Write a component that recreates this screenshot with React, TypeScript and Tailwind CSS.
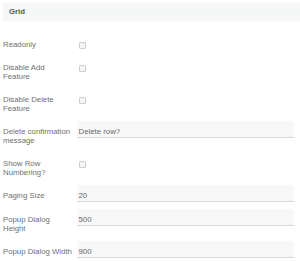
import React from 'react';

type Field =
  | { label: string; kind: 'check' }
  | { label: string; kind: 'text'; value: string };

const fields: Field[] = [
  { label: 'Readonly', kind: 'check' },
  { label: 'Disable Add Feature', kind: 'check' },
  { label: 'Disable Delete Feature', kind: 'check' },
  { label: 'Delete confirmation message', kind: 'text', value: 'Delete row?' },
  { label: 'Show Row Numbering?', kind: 'check' },
  { label: 'Paging Size', kind: 'text', value: '20' },
  { label: 'Popup Dialog Height', kind: 'text', value: '500' },
  { label: 'Popup Dialog Width', kind: 'text', value: '900' },
];

export default function App() {
  return (
    <div className="w-[300px] h-[261px] overflow-hidden bg-white pt-[3px] pl-[3px] font-['Liberation_Sans',Arial,sans-serif] text-[7.8px] text-[#707070]">
      <div className="h-[18px] bg-[#f6f7f7] flex items-center pl-[6px] font-bold text-[#5a5a5a]">Grid</div>
      <div className="mt-[13px] flex flex-col gap-[7px]">
        {fields.map((f) => (
          <div key={f.label} className="flex gap-[4px]">
            <div className="w-[70px] shrink-0 pt-[6px] leading-[9.5px]">{f.label}</div>
            {f.kind === 'check' ? (
              <div className="pl-[2px] pt-[8px]">
                <div className="w-[7px] h-[7px] rounded-[1px] border border-[#cfcfcf] bg-[#f5f5f5]" />
              </div>
            ) : (
              <div className="w-[217px] h-[17px] bg-[#f8f8f8] border-b-[1.5px] border-[#d8d8d8] pl-[1.5px] pt-[6px] leading-[9.5px] text-[#666]">
                {f.value}
              </div>
            )}
          </div>
        ))}
      </div>
    </div>
  );
}
